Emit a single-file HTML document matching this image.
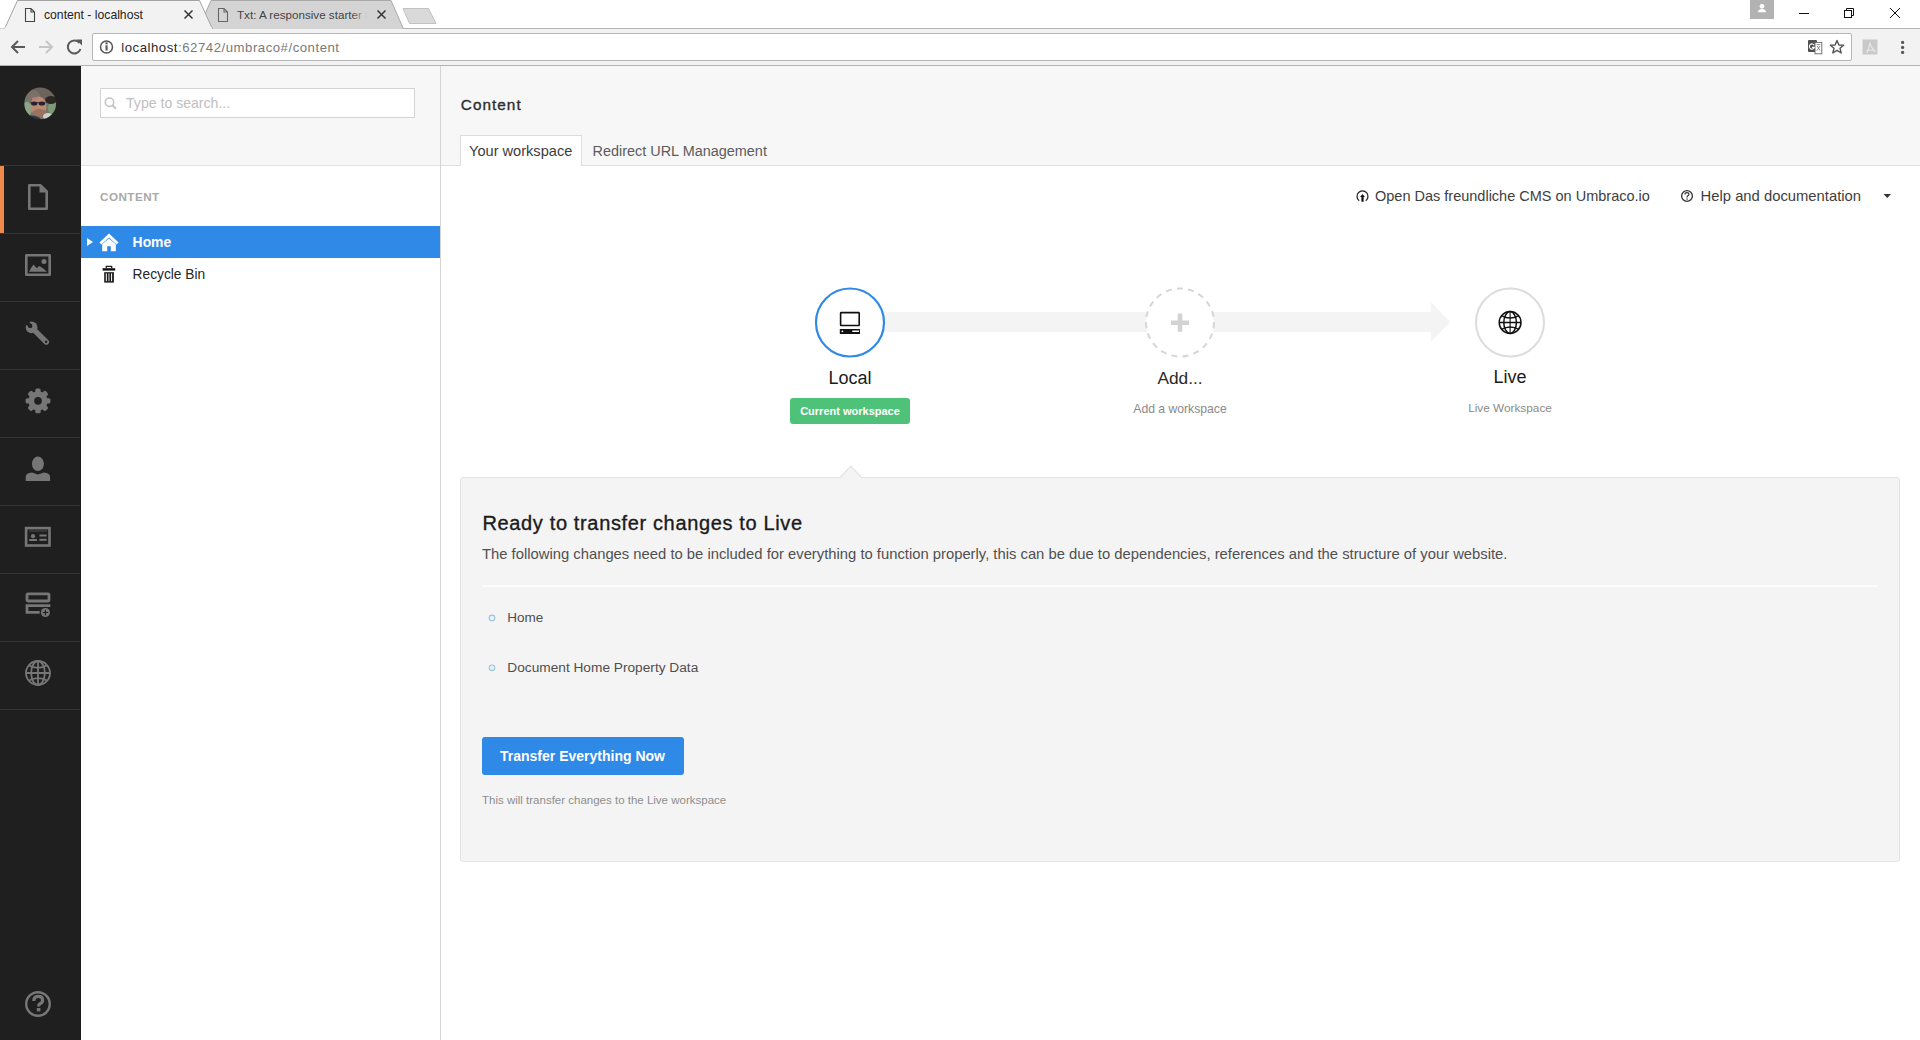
<!DOCTYPE html>
<html><head><meta charset="utf-8"><title>content - localhost</title>
<style>
*{box-sizing:border-box;margin:0;padding:0}
html,body{width:1920px;height:1040px;overflow:hidden;background:#fff;font-family:"Liberation Sans",sans-serif}
.t{position:absolute;white-space:nowrap}
.r{position:absolute;display:block}
</style></head><body>
<div class="r" style="left:0px;top:0px;width:1920px;height:28px;background:#fff"></div>
<div class="r" style="left:0px;top:28px;width:1920px;height:38px;background:#f2f2f2"></div>
<div class="r" style="left:0px;top:28px;width:1920px;height:1px;background:#b4b4b4"></div>
<div class="r" style="left:0px;top:65px;width:1920px;height:1px;background:#b2b2b2"></div>
<svg class="r" style="left:0;top:0" width="460" height="30" viewBox="0 0 460 30">
<path d="M198.5,29 L211,0.5 L391,0.5 L403.5,29" fill="#d4d4d4" stroke="#a9a9a9" stroke-width="1"/>
<path d="M4.5,29 L17.5,0.5 L199.5,0.5 L212.5,29" fill="#f2f2f2" stroke="#a3a3a3" stroke-width="1"/>
<rect x="0" y="28.5" width="5" height="2" fill="#f2f2f2"/>
<path d="M403,8.5 L428.5,8.5 L436,23.5 L409.5,23.5 Z" fill="#d9d9d9" stroke="#c2c2c2" stroke-width="1"/>
<path d="M5,28 L212,28" stroke="#f2f2f2" stroke-width="1.5"/>
<g fill="none" stroke="#444" stroke-width="1.1">
<path d="M25.5,8.5 H31 L34.5,12 V21.5 H25.5 Z M31,8.5 V12 H34.5"/>
</g>
<g fill="none" stroke="#666" stroke-width="1.1">
<path d="M218.5,8.5 H224 L227.5,12 V21.5 H218.5 Z M224,8.5 V12 H227.5"/>
</g>
<g stroke="#333" stroke-width="1.5">
<path d="M184.5,10.5 L192.5,18.5 M192.5,10.5 L184.5,18.5"/>
<path d="M377.5,10.5 L385.5,18.5 M385.5,10.5 L377.5,18.5"/>
</g>
</svg>
<div class="t" style="left:44px;top:8.67px;font-size:12.2px;line-height:12.2px;color:#222;font-weight:400;">content - localhost</div>
<div class="t" style="left:237px;top:9px;height:16px;font-size:11.65px;line-height:12px;color:#444;width:135px;overflow:hidden">Txt: A responsive starter template</div>
<div class="r" style="left:352px;top:4px;width:22px;height:20px;background:linear-gradient(to right,rgba(212,212,212,0),#d4d4d4 70%)"></div>
<div class="r" style="left:92px;top:33px;width:1760px;height:28px;background:#fff;border:1px solid #b6b6b6;border-radius:2px"></div>
<svg class="r" style="left:0;top:30" width="140" height="36" viewBox="0 30 140 36">
<g fill="none" stroke="#5a5a5a" stroke-width="2">
<path d="M25,47 H12 M18,41 L12,47 L18,53"/>
</g>
<g fill="none" stroke="#c6c6c6" stroke-width="2">
<path d="M39,47 H52 M46,41 L52,47 L46,53"/>
</g>
<g fill="none" stroke="#5a5a5a" stroke-width="2">
<path d="M79.5,43 A6.5,6.5 0 1 0 80.5,49"/>
</g>
<path d="M76,39.5 L82,39.5 L82,45.5 Z" fill="#5a5a5a"/>
<circle cx="106.5" cy="47" r="6" fill="none" stroke="#555" stroke-width="1.5"/>
<rect x="105.5" y="45.3" width="2.1" height="5.2" fill="#555"/>
<rect x="105.5" y="42.4" width="2.1" height="2" fill="#555"/>
</svg>
<div class="t" style="left:121.3px;top:40.82px;font-size:13.2px;line-height:13.2px;color:#7a7a7a;font-weight:400;letter-spacing:0.52px"><span style="color:#2a2a2a">localhost</span>:62742/umbraco#/content</div>
<svg class="r" style="left:1740px;top:0" width="180" height="66" viewBox="1740 0 180 66">
<rect x="1750" y="0" width="24" height="19" fill="#b2b2b2"/>
<circle cx="1762" cy="6.3" r="2.4" fill="#fff"/>
<path d="M1757.8,12.2 Q1758.5,9 1762,9 Q1765.5,9 1766.2,12.2 Z" fill="#fff"/>
<rect x="1799" y="13" width="10" height="1" fill="#111"/>
<g fill="none" stroke="#111" stroke-width="1">
<rect x="1844.5" y="10.5" width="7" height="7"/>
<path d="M1846.5,10.5 V8.5 H1853.5 V15.5 H1851.5"/>
<path d="M1890,8 L1900,18 M1900,8 L1890,18"/>
</g>
<rect x="1808" y="40" width="9" height="12" rx="1" fill="#4f4f4f"/>
<rect x="1815" y="42.4" width="6.8" height="11.4" fill="#fff" stroke="#666" stroke-width="0.9"/>
<path d="M1814.2,45.2 A2.6,2.6 0 1 0 1814.4,47.4 H1812" fill="none" stroke="#fff" stroke-width="1.1"/>
<path d="M1816.6,44.6 H1820.4 M1818.5,44 V45 M1817,46 L1820.2,50.6 M1820,46 L1816.8,50.6" stroke="#777" stroke-width="0.8" fill="none"/>
<path d="M1837,40.5 L1838.9,45 L1843.6,45.3 L1840,48.3 L1841.2,53 L1837,50.4 L1832.8,53 L1834,48.3 L1830.4,45.3 L1835.1,45 Z" fill="none" stroke="#555" stroke-width="1.4" stroke-linejoin="round"/>
<rect x="1862.5" y="39.5" width="15" height="15" fill="#c9c9c9"/>
<path d="M1867,52.5 Q1869.5,47 1870,42.5 Q1871,48 1875.5,51.5 Q1871.5,49 1866.5,51" fill="none" stroke="#e6e6e6" stroke-width="1.2"/>
<circle cx="1902.6" cy="42.4" r="1.6" fill="#555"/>
<circle cx="1902.6" cy="47.4" r="1.6" fill="#555"/>
<circle cx="1902.6" cy="52.4" r="1.6" fill="#555"/>
</svg>
<div class="r" style="left:0px;top:66px;width:81px;height:974px;background:#1f1f1f"></div>
<div class="r" style="left:0px;top:165px;width:80px;height:1px;background:#343434"></div>
<div class="r" style="left:0px;top:233px;width:80px;height:1px;background:#343434"></div>
<div class="r" style="left:0px;top:301px;width:80px;height:1px;background:#343434"></div>
<div class="r" style="left:0px;top:369px;width:80px;height:1px;background:#343434"></div>
<div class="r" style="left:0px;top:437px;width:80px;height:1px;background:#343434"></div>
<div class="r" style="left:0px;top:505px;width:80px;height:1px;background:#343434"></div>
<div class="r" style="left:0px;top:573px;width:80px;height:1px;background:#343434"></div>
<div class="r" style="left:0px;top:641px;width:80px;height:1px;background:#343434"></div>
<div class="r" style="left:0px;top:709px;width:80px;height:1px;background:#343434"></div>
<div class="r" style="left:0px;top:166px;width:4px;height:67px;background:#f0894a"></div>
<svg class="r" style="left:20px;top:83px" width="40" height="40" viewBox="20 83 40 40">
<defs><clipPath id="av"><circle cx="40.2" cy="103.4" r="15.9"/></clipPath>
<filter id="bl" x="-20%" y="-20%" width="140%" height="140%"><feGaussianBlur stdDeviation="0.45"/></filter></defs>
<g clip-path="url(#av)"><g filter="url(#bl)">
<rect x="20" y="83" width="40" height="40" fill="#6f7a68"/>
<ellipse cx="27" cy="109" rx="5" ry="7" fill="#8da487"/>
<ellipse cx="53" cy="108" rx="5" ry="6" fill="#7f9a78"/>
<ellipse cx="39" cy="92" rx="15" ry="9" fill="#6c645d"/>
<ellipse cx="33" cy="96" rx="7" ry="6" fill="#7a6f66"/>
<ellipse cx="51" cy="100" rx="6" ry="4" fill="#2c2822"/>
<ellipse cx="38.5" cy="106" rx="8" ry="9.5" fill="#b98b73"/>
<ellipse cx="35" cy="98.5" rx="3" ry="1.5" fill="#b67d7a"/>
<ellipse cx="39.5" cy="113" rx="7" ry="4" fill="#9b7260"/>
<path d="M30.5,102.5 H45.5" stroke="#3a3040" stroke-width="0.8"/>
<ellipse cx="34.2" cy="103.6" rx="3.2" ry="2" fill="#262233"/>
<ellipse cx="41.9" cy="103.4" rx="3.3" ry="2" fill="#262233"/>
<ellipse cx="31" cy="120" rx="10" ry="4.5" fill="#30364a"/>
<ellipse cx="48" cy="116.5" rx="5" ry="3.5" fill="#cfcfcf"/>
</g></g>
</svg>
<svg class="r" style="left:0;top:166px" width="80" height="874" viewBox="0 166 80 874">
<g fill="none" stroke="#767676" stroke-width="2.6" stroke-linejoin="round">
<path d="M29.3,185.3 H40.5 L46.7,191.5 V208.7 H29.3 Z"/>
<rect x="26.3" y="255.3" width="23.4" height="19.4"/>
<circle cx="38" cy="1004" r="11.8" stroke-width="2.4"/>
</g>
<path d="M39.5,184 L48,192.5 L39.5,192.5 Z" fill="#767676"/>
<path d="M29,271.8 Q31.5,267 33.5,264.6 Q35.5,267 37,268.3 Q38.2,266.2 39.5,266 Q43.5,268.5 47,271.8 Z" fill="#767676"/>
<circle cx="44" cy="261.6" r="2.5" fill="#767676"/>
<!-- wrench -->
<circle cx="31.6" cy="327.4" r="5.9" fill="#767676"/>
<path d="M33.5,329.3 L46.3,342" stroke="#767676" stroke-width="5.4" stroke-linecap="round"/>
<circle cx="30.2" cy="325.9" r="2.2" fill="#1f1f1f"/>
<path d="M30.2,325.9 L25,320.7" stroke="#1f1f1f" stroke-width="4" />
<circle cx="46.1" cy="341.8" r="1.2" fill="#1f1f1f"/>
<!-- gear -->
<g transform="translate(38,400.9)" fill="#767676">
<circle cx="0" cy="0" r="9.6"/>
<rect x="-2.7" y="-12.4" width="5.4" height="24.8" rx="1.6"/>
<rect x="-2.7" y="-12.4" width="5.4" height="24.8" rx="1.6" transform="rotate(45)"/>
<rect x="-2.7" y="-12.4" width="5.4" height="24.8" rx="1.6" transform="rotate(90)"/>
<rect x="-2.7" y="-12.4" width="5.4" height="24.8" rx="1.6" transform="rotate(135)"/>
<circle cx="0" cy="0" r="3.8" fill="#1f1f1f"/>
</g>
<!-- user -->
<ellipse cx="37.9" cy="463.8" rx="6" ry="7.2" fill="#767676"/>
<path d="M25.7,481 V476.5 Q26,472.8 32,472.4 L37.9,474.5 L43.8,472.4 Q49.8,472.8 50.1,476.5 V481 Z" fill="#767676"/>
<!-- card -->
<g fill="none" stroke="#767676" stroke-width="2.6"><rect x="26.1" y="528.1" width="23.4" height="17.4"/></g>
<path d="M29,531 H47" stroke="#767676" stroke-width="0.9" opacity="0.6"/>
<circle cx="33" cy="536.2" r="2.1" fill="#767676"/>
<rect x="29.2" y="539" width="7.8" height="2" fill="#767676"/>
<rect x="39.4" y="534.5" width="7.2" height="2" fill="#767676"/>
<rect x="39.4" y="538.8" width="7.2" height="2" fill="#767676"/>
<!-- forms -->
<g fill="none" stroke="#767676" stroke-width="2.8">
<rect x="27" y="593.8" width="22" height="7.2" rx="1"/>
<path d="M41,612.3 H27 V605.7 H49 V607"/>
</g>
<circle cx="45.4" cy="612.5" r="5.8" fill="#1f1f1f"/>
<circle cx="45.4" cy="612.5" r="4.5" fill="#767676"/>
<path d="M45.4,609.8 V615.2 M42.7,612.5 H48.1" stroke="#1f1f1f" stroke-width="1.2"/>
<!-- globe -->
<g fill="none" stroke="#767676" stroke-width="1.8">
<circle cx="38" cy="673" r="12"/>
<ellipse cx="38" cy="673" rx="6.8" ry="12"/>
<path d="M26,673 H50 M28.5,665.3 Q38,670.5 47.5,665.3 M28.5,680.7 Q38,675.5 47.5,680.7 M38,661 V685"/>
</g>
<!-- help ? -->
<path d="M33.8,1001 Q33.8,996.4 38.2,996.4 Q42.6,996.4 42.6,1000.2 Q42.6,1002.6 40,1003.8 Q38.6,1004.5 38.6,1006.4" fill="none" stroke="#767676" stroke-width="3.2"/>
<rect x="36.8" y="1008" width="3.6" height="3.4" fill="#767676"/>
</svg>
<div class="r" style="left:81px;top:66px;width:359px;height:99px;background:#f7f7f7"></div>
<div class="r" style="left:81px;top:165px;width:359px;height:1px;background:#e1e1e1"></div>
<div class="r" style="left:440px;top:66px;width:1px;height:974px;background:#d4d4d4"></div>
<div class="r" style="left:100px;top:88px;width:315px;height:30px;background:#fff;border:1px solid #d3d3d3"></div>
<svg class="r" style="left:100px;top:90px" width="30" height="26" viewBox="100 90 30 26">
<circle cx="109.5" cy="102.2" r="4.2" fill="none" stroke="#c4c4c4" stroke-width="1.6"/>
<path d="M112.5,105.2 L116,108.7" stroke="#c4c4c4" stroke-width="2"/>
</svg>
<div class="t" style="left:126px;top:96.36px;font-size:14.1px;line-height:14.1px;color:#c0c0c0;font-weight:400;">Type to search...</div>
<div class="t" style="left:100px;top:191.19px;font-size:11.7px;line-height:11.7px;color:#a9a9a9;font-weight:700;letter-spacing:0.45px">CONTENT</div>
<div class="r" style="left:81px;top:226px;width:359px;height:32px;background:#2f89e6"></div>
<svg class="r" style="left:81px;top:226px" width="60" height="32" viewBox="81 226 60 32">
<path d="M87,238 L93,242 L87,246 Z" fill="#fff"/>
<path d="M109,233.6 L118.6,242.6 L116.6,244.6 L109,237.5 L101.4,244.6 L99.4,242.6 Z" fill="#fff"/>
<path d="M102.2,244.2 L109,238.6 L115.8,244.2 V251.3 H110.8 V246.2 H107.2 V251.3 H102.2 Z" fill="#fff"/>
</svg>
<div class="t" style="left:132.6px;top:235.73px;font-size:13.9px;line-height:13.9px;color:#fff;font-weight:700;">Home</div>
<svg class="r" style="left:95px;top:260px" width="30" height="30" viewBox="95 260 30 30">
<path d="M106.3,268.3 V266.3 H111.7 V268.3" fill="none" stroke="#222" stroke-width="1.3"/>
<rect x="102.6" y="268.2" width="12.6" height="2.4" fill="#111"/>
<rect x="104.2" y="272.2" width="9.7" height="10.4" fill="#1a1a1a"/>
<rect x="105.8" y="273.4" width="1.1" height="7.8" fill="#eee"/>
<rect x="108.4" y="273.4" width="1.1" height="7.8" fill="#ccc"/>
<rect x="111" y="273.4" width="1.1" height="7.8" fill="#eee"/>
</svg>
<div class="t" style="left:132.6px;top:268.26px;font-size:13.75px;line-height:13.75px;color:#262626;font-weight:400;">Recycle Bin</div>
<div class="r" style="left:441px;top:66px;width:1479px;height:99px;background:#f7f7f7"></div>
<div class="r" style="left:441px;top:165px;width:1479px;height:1px;background:#dedede"></div>
<div class="t" style="left:460.8px;top:96.95px;font-size:15.3px;line-height:15.3px;color:#2e2e2e;font-weight:400;letter-spacing:1.05px;-webkit-text-stroke:0.35px #2e2e2e">Content</div>
<div class="r" style="left:460px;top:135px;width:122px;height:31px;background:#fff;border:1px solid #dcdcdc;border-bottom:none"></div>
<div class="t" style="left:469px;top:143.54px;font-size:14.6px;line-height:14.6px;color:#3c3c3c;font-weight:400;">Your workspace</div>
<div class="t" style="left:592.5px;top:143.67px;font-size:14.45px;line-height:14.45px;color:#5c5c5c;font-weight:400;">Redirect URL Management</div>
<svg class="r" style="left:1350px;top:185px" width="50" height="22" viewBox="1350 185 50 22">
<path d="M1359.2,200.8 A5.5,5.5 0 1 1 1365.8,200.8" fill="none" stroke="#222" stroke-width="1.25"/>
<path d="M1362.5,194 L1364.9,196.9 H1363.6 V201.8 H1361.4 V196.9 H1360.1 Z" fill="#111"/>
</svg>
<div class="t" style="left:1375px;top:188.52px;font-size:14.5px;line-height:14.5px;color:#3e3e3e;font-weight:400;">Open Das freundliche CMS on Umbraco.io</div>
<svg class="r" style="left:1675px;top:185px" width="25" height="22" viewBox="1675 185 25 22">
<circle cx="1687" cy="196" r="5.4" fill="none" stroke="#333" stroke-width="1.3"/>
<path d="M1685,194.5 Q1685,192.7 1687,192.7 Q1689,192.7 1689,194.3 Q1689,195.3 1687.6,196 Q1687,196.4 1687,197.6" fill="none" stroke="#333" stroke-width="1.2"/>
<rect x="1686.4" y="198.4" width="1.3" height="1.3" fill="#333"/>
</svg>
<div class="t" style="left:1700.6px;top:188.67px;font-size:14.8px;line-height:14.8px;color:#3e3e3e;font-weight:400;">Help and documentation</div>
<svg class="r" style="left:1880px;top:190px" width="15" height="12" viewBox="1880 190 15 12"><path d="M1883.5,194 H1891 L1887.25,198 Z" fill="#333"/></svg>
<svg class="r" style="left:780px;top:280px" width="800" height="90" viewBox="780 280 800 90">
<rect x="880" y="312" width="551" height="20" fill="#f4f4f4"/>
<path d="M1430.8,302 L1450.2,322 L1430.8,341.8 Z" fill="#f4f4f4"/>
<circle cx="850" cy="322.5" r="34" fill="#fff" stroke="#2f89e6" stroke-width="2.2"/>
<circle cx="1180" cy="322.5" r="34" fill="#fff" stroke="#d6d6d6" stroke-width="2" stroke-dasharray="6 5.2"/>
<circle cx="1510" cy="322.5" r="34" fill="#fff" stroke="#dcdcdc" stroke-width="2"/>
<rect x="840.6" y="312.6" width="18.6" height="12.9" rx="0.6" fill="none" stroke="#111" stroke-width="1.6"/>
<rect x="839.8" y="328.9" width="20.2" height="5" rx="0.5" fill="#111"/>
<circle cx="842.4" cy="331.3" r="0.9" fill="#fff"/>
<rect x="852.3" y="330.5" width="6.7" height="1.5" fill="#fff"/>
<path d="M1180,313.6 V331.8 M1171,322.8 H1189" stroke="#d3d3d3" stroke-width="4.6"/>
<g fill="none" stroke="#111" stroke-width="1.5">
<circle cx="1510.1" cy="322.5" r="10.9"/>
<ellipse cx="1510.1" cy="322.5" rx="6.3" ry="10.9"/>
<path d="M1499.2,322.6 H1521 M1501.5,315.6 Q1510.1,320.5 1518.7,315.6 M1501.5,329.4 Q1510.1,324.5 1518.7,329.4"/>
<path d="M1510.1,311.6 V333.4" stroke-width="1.1"/>
</g>
</svg>
<div class="t" style="left:550px;width:600px;text-align:center;top:368.66px;font-size:18px;line-height:18px;color:#1b1b1b;font-weight:400;">Local</div>
<div class="r" style="left:790px;top:398px;width:120px;height:26px;background:#4fc27a;border-radius:3px"></div>
<div class="t" style="left:550px;width:600px;text-align:center;top:406.19px;font-size:11px;line-height:11px;color:#fff;font-weight:700;">Current workspace</div>
<div class="t" style="left:880px;width:600px;text-align:center;top:369.95px;font-size:17.3px;line-height:17.3px;color:#2a2a2a;font-weight:400;">Add...</div>
<div class="t" style="left:880px;width:600px;text-align:center;top:403.47px;font-size:12.2px;line-height:12.2px;color:#8a8a8a;font-weight:400;">Add a workspace</div>
<div class="t" style="left:1210px;width:600px;text-align:center;top:368.36px;font-size:18px;line-height:18px;color:#1b1b1b;font-weight:400;">Live</div>
<div class="t" style="left:1210px;width:600px;text-align:center;top:403.41px;font-size:11.8px;line-height:11.8px;color:#8a8a8a;font-weight:400;">Live Workspace</div>
<div class="r" style="left:460px;top:477px;width:1440px;height:385px;background:#f4f4f4;border:1px solid #e3e3e3;border-radius:3px"></div>
<svg class="r" style="left:835px;top:460px" width="32" height="20" viewBox="835 460 32 20">
<path d="M839.5,478 L850.8,466 L862,478" fill="#f4f4f4" stroke="#e3e3e3" stroke-width="1.1"/>
<rect x="839" y="478" width="24" height="2" fill="#f4f4f4"/>
</svg>
<div class="t" style="left:482.5px;top:513.37px;font-size:20px;line-height:20px;color:#1b1b1b;font-weight:400;letter-spacing:0.64px;-webkit-text-stroke:0.35px #1b1b1b">Ready to transfer changes to Live</div>
<div class="t" style="left:482px;top:547.27px;font-size:14.8px;line-height:14.8px;color:#505050;font-weight:400;">The following changes need to be included for everything to function properly, this can be due to dependencies, references and the structure of your website.</div>
<div class="r" style="left:482px;top:585px;width:1396px;height:2px;background:#fdfdfd"></div>
<svg class="r" style="left:485px;top:610px" width="15" height="65" viewBox="485 610 15 65">
<circle cx="492" cy="617.9" r="2.8" fill="#e4f3fb" stroke="#a2c2d6" stroke-width="1.1"/>
<circle cx="492" cy="667.8" r="2.8" fill="#e4f3fb" stroke="#a2c2d6" stroke-width="1.1"/>
</svg>
<div class="t" style="left:507.3px;top:611.17px;font-size:13.5px;line-height:13.5px;color:#4f4f4f;font-weight:400;">Home</div>
<div class="t" style="left:507.3px;top:661.10px;font-size:13.7px;line-height:13.7px;color:#4f4f4f;font-weight:400;">Document Home Property Data</div>
<div class="r" style="left:482px;top:737px;width:202px;height:38px;background:#2f89e6;border-radius:3px"></div>
<div class="t" style="left:500px;top:749.35px;font-size:14px;line-height:14px;color:#fff;font-weight:700;">Transfer Everything Now</div>
<div class="t" style="left:482px;top:794.86px;font-size:11.5px;line-height:11.5px;color:#8e8e8e;font-weight:400;">This will transfer changes to the Live workspace</div>
</body></html>
